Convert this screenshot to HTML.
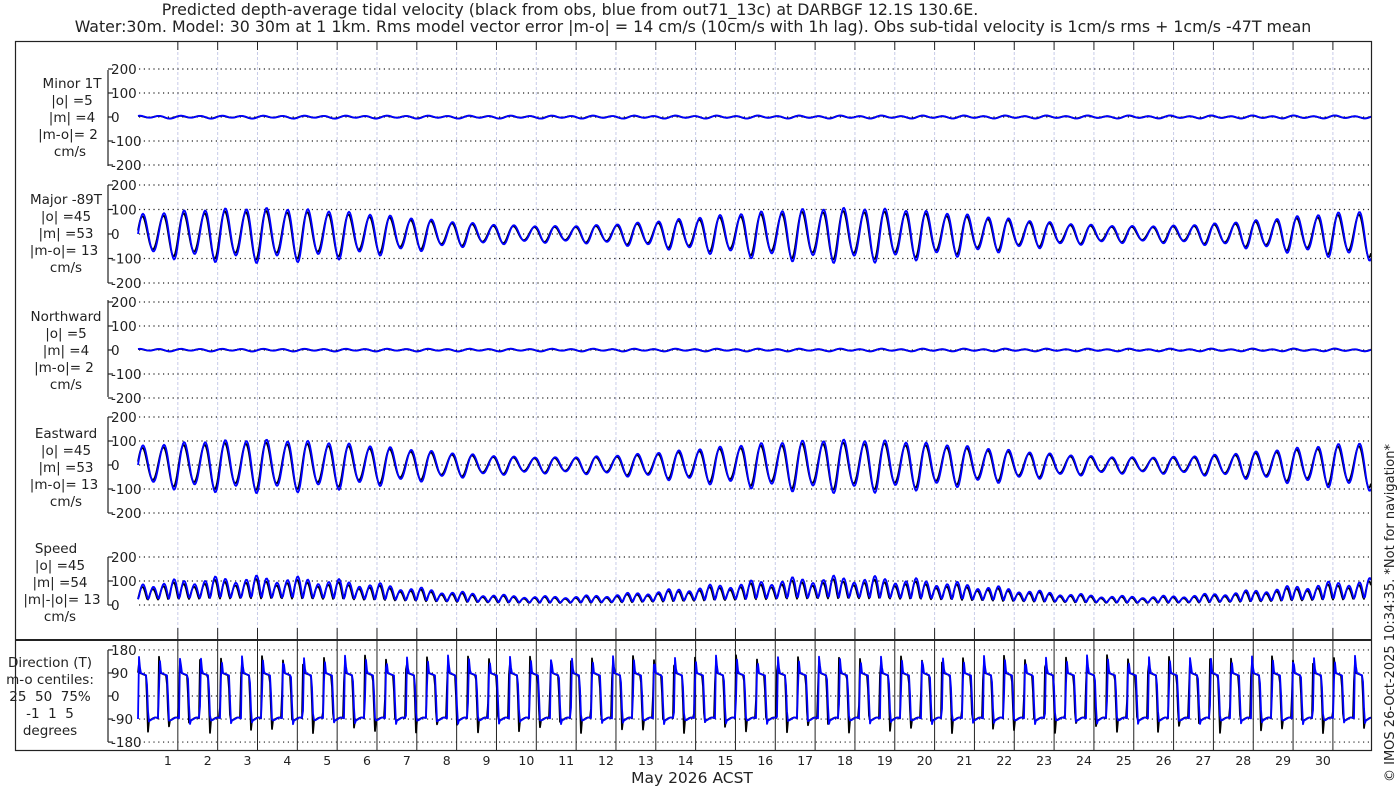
<!DOCTYPE html>
<html><head><meta charset="utf-8">
<style>
html,body{margin:0;padding:0;background:#fff;}
body{width:1400px;height:800px;overflow:hidden;position:relative;font-family:"DejaVu Sans","Liberation Sans",sans-serif;}
svg{position:absolute;left:0;top:0;}
text{font-family:"DejaVu Sans","Liberation Sans",sans-serif;fill:#222;}
</style></head><body>
<svg id="s" width="1400" height="800" viewBox="0 0 1400 800">
<text x="570" y="15" font-size="15.8" text-anchor="middle">Predicted depth-average tidal velocity (black from obs, blue from out71_13c) at DARBGF 12.1S 130.6E.</text>
<text x="693" y="32" font-size="15.8" text-anchor="middle">Water:30m. Model: 30 30m at 1 1km. Rms model vector error |m-o| = 14 cm/s (10cm/s with 1h lag). Obs sub-tidal velocity is 1cm/s rms + 1cm/s -47T mean</text>
<g id="grid"></g>
<g id="curves" fill="none" stroke-linejoin="round"></g>
<rect x="15.5" y="41.5" width="1356" height="709" fill="none" stroke="#222" stroke-width="1.2"/>
<line x1="15" y1="640" x2="1372" y2="640" stroke="#222" stroke-width="2"/>
<g font-size="13.5" text-anchor="middle">
<text x="72" y="88">Minor 1T</text><text x="72" y="105">|o| =5</text><text x="72" y="122">|m| =4</text><text x="68" y="139">|m-o|= 2</text><text x="70" y="156">cm/s</text>
<text x="66" y="204">Major -89T</text><text x="66" y="221">|o| =45</text><text x="66" y="238">|m| =53</text><text x="64" y="255">|m-o|= 13</text><text x="66" y="272">cm/s</text>
<text x="66" y="321">Northward</text><text x="66" y="338">|o| =5</text><text x="66" y="355">|m| =4</text><text x="64" y="372">|m-o|= 2</text><text x="66" y="389">cm/s</text>
<text x="66" y="438">Eastward</text><text x="66" y="455">|o| =45</text><text x="66" y="472">|m| =53</text><text x="64" y="489">|m-o|= 13</text><text x="66" y="506">cm/s</text>
<text x="56" y="553">Speed</text><text x="60" y="570">|o| =45</text><text x="60" y="587">|m| =54</text><text x="62" y="604">|m|-|o|= 13</text><text x="60" y="621">cm/s</text>
<text x="50" y="667">Direction (T)</text><text x="50" y="684">m-o centiles:</text><text x="50" y="701" xml:space="preserve">25  50  75%</text><text x="50" y="718" xml:space="preserve">-1  1  5</text><text x="50" y="735">degrees</text>
</g>
<g id="ticklabels" font-size="13.5"></g>
<g id="daylabels" font-size="12.5" text-anchor="middle"></g>
<text x="692" y="783" font-size="15.5" text-anchor="middle">May 2026 ACST</text>
<text transform="translate(1394,782) rotate(-90)" font-size="13">© IMOS 26-Oct-2025 10:34:35. *Not for navigation*</text>
</svg>
<script>
(function(){
var NS="http://www.w3.org/2000/svg";
function el(p,n,a,t){var e=document.createElementNS(NS,n);for(var k in a)e.setAttribute(k,a[k]);if(t!==undefined)e.textContent=t;p.appendChild(e);return e;}
var g=document.getElementById('grid'),c=document.getElementById('curves'),tl=document.getElementById('ticklabels'),dl=document.getElementById('daylabels');
var X0=138,X1=1371,D=39.83;
var panels=[
 {y0:117,s:0.24,ticks:[200,100,0,-100,-200],top:70,bot:166},
 {y0:234,s:0.245,ticks:[200,100,0,-100,-200],top:185,bot:283},
 {y0:350,s:0.24,ticks:[200,100,0,-100,-200],top:300,bot:397},
 {y0:465,s:0.24,ticks:[200,100,0,-100,-200],top:417,bot:513},
 {y0:605,s:0.24,ticks:[200,100,0],top:557,bot:605},
 {y0:696,s:0.256,ticks:[180,90,0,-90,-180],top:650,bot:742}
];
for(var k=1;k<=30;k++){var x=X0+D*k;
 el(g,'line',{x1:x,y1:42,x2:x,y2:640,stroke:'#c8cce8','stroke-width':1,'stroke-dasharray':'3,2'});
 el(g,'line',{x1:x,y1:42,x2:x,y2:50,stroke:'#222','stroke-width':1});
 el(g,'line',{x1:x,y1:628,x2:x,y2:640,stroke:'#222','stroke-width':1});
 el(g,'line',{x1:x,y1:640,x2:x,y2:750,stroke:'#222','stroke-width':1});
 el(dl,'text',{x:X0+D*(k-0.25),y:765},String(k));
}
panels.forEach(function(p){
 el(g,'line',{x1:108,y1:p.top,x2:108,y2:p.bot,stroke:'#222','stroke-width':1.2});
 p.ticks.forEach(function(v){var y=p.y0-v*p.s;
  el(g,'line',{x1:108,y1:y,x2:113,y2:y,stroke:'#222','stroke-width':1.2});
  el(g,'line',{x1:139,y1:y,x2:X1,y2:y,stroke:'#222','stroke-width':1.2,'stroke-dasharray':'1.2,3.6'});
  el(tl,'text',{x:111,y:y+5,fill:'#222'},String(v));
 });
});
function amp(t){return 68+36*Math.cos(2*Math.PI*(t-17.8)/14.8);}
function maj(t,o){var ph=2*Math.PI*(t+o)/0.5175;var di=Math.cos(2*Math.PI*(t+o)/1.035+0.6);
 return amp(t)*(Math.sin(ph)*(1+0.15*di));}
function minr(t,o){return 5*Math.sin(2*Math.PI*(t+o)/0.5175+1.2)+2*Math.sin(2*Math.PI*t/1.03);}
function dir(t,o,blk){var ph=((t+o)/0.5175)%1; if(ph<0)ph+=1;
 var d;
 if(ph<0.04){d=-90+(ph/0.04)*250;}
 else if(ph<0.12){d=160-70*((ph-0.04)/0.08);}
 else if(ph<0.42){d=90-10*((ph-0.12)/0.3);}
 else if(ph<0.5){d=80-170*((ph-0.42)/0.08);}
 else if(ph<0.54){d=-90-(blk?55:20)*Math.sin(Math.PI*(ph-0.5)/0.04);}
 else {d=-90+6*Math.sin(ph*9);}
 return d;}
function path(f,p,o,blk){var s='';for(var x=X0;x<=X1;x+=1){var t=(x-X0)/D;var v=f(t,o,blk);var y=p.y0-v*p.s;s+=(x==X0?'M':'L')+x+','+y.toFixed(1);}return s;}
var fns=[minr,maj,function(t,o){return minr(t,o)*0.9;},function(t,o){return maj(t,o)*0.99;},function(t,o){var a=maj(t,o);var b=0.3*amp(t);return Math.sqrt(a*a+b*b);},dir];
fns.forEach(function(f,i){var p=panels[i];
 var sc=(i==5)?1:0.88;
 el(c,'path',{d:path(function(t,o,b){return f(t,o,b)*sc;},p,0.015,true),stroke:'#000','stroke-width':1.8});
 el(c,'path',{d:path(f,p,0,false),stroke:'#0000ff','stroke-width':1.8});
});
})();
</script>
</body></html>
